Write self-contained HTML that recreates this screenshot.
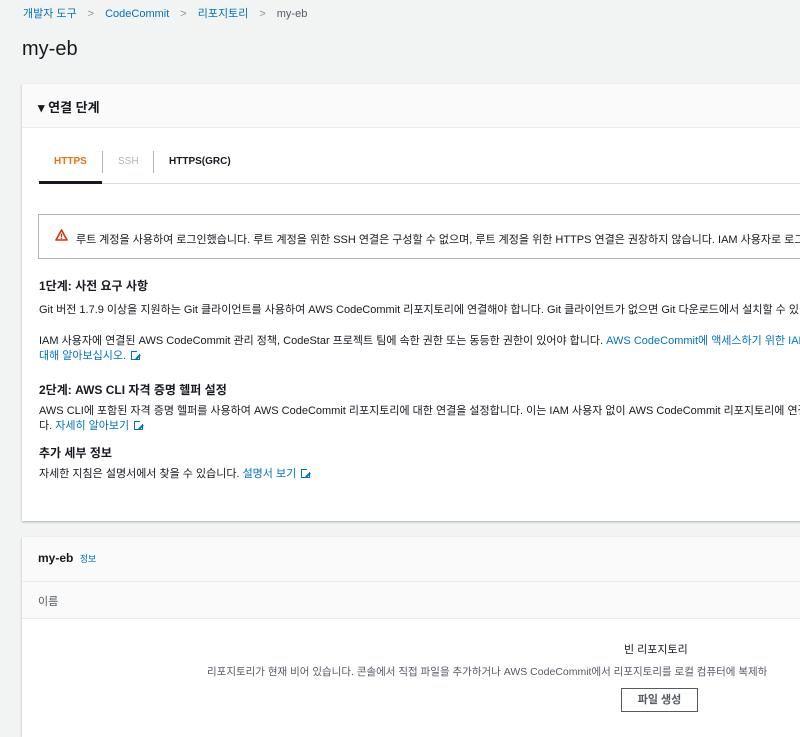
<!DOCTYPE html>
<html><head><meta charset="utf-8"><style>
*{margin:0;padding:0;box-sizing:border-box}
body{width:800px;height:729px;overflow:hidden;background:#f2f3f3;font-family:"Liberation Sans","Noto Sans CJK KR",sans-serif;color:#16191f;font-size:11px;position:relative}
.abs{position:absolute;white-space:nowrap}
a{color:#0073bb;text-decoration:none}
.bc{top:5px;left:23px;font-size:11px;color:#0073bb}
.bc .s{color:#879596;margin:0 11px}
.bc .c{color:#545b64}
h1{position:absolute;top:38px;left:22px;font-size:20px;font-weight:normal}
.card{position:absolute;left:22px;width:800px;background:#fff;box-shadow:0 1px 2px rgba(0,28,36,.3)}
.ext{display:inline-block;width:9px;height:9px;border:1.5px solid #0073bb;margin-left:5px;vertical-align:-1px;position:relative}
.ext:after{content:"";position:absolute;right:-3px;top:-3px;width:5px;height:5px;background:#fff}
.ext:before{content:"";position:absolute;right:-1px;top:2px;width:6px;height:1.5px;background:#0073bb;transform:rotate(-45deg);transform-origin:right}
</style></head><body>
<div class="abs bc">개발자 도구<span class="s">&gt;</span>CodeCommit<span class="s">&gt;</span>리포지토리<span class="s">&gt;</span><span class="c">my-eb</span></div>
<h1>my-eb</h1>
<div class="card" style="top:84px;height:437px">
 <div style="height:44px;background:#fafafa;border-bottom:1px solid #eaeded"></div>
 <div class="abs" style="left:16px;top:13px;font-size:13px;font-weight:bold">▾ 연결 단계</div>
 <div class="abs" style="left:17px;top:99px;width:800px;border-bottom:1px solid #d5dbdb"></div>
 <div class="abs" style="left:17px;top:97px;width:63px;height:3px;background:#16191f"></div>
 <div class="abs" style="left:32px;top:72px;font-weight:bold;color:#ec7211;font-size:10px">HTTPS</div>
 <div class="abs" style="left:80px;top:67px;width:1px;height:22px;background:#aab7b8"></div>
 <div class="abs" style="left:96px;top:72px;color:#aab7b8;font-size:10px">SSH</div>
 <div class="abs" style="left:131px;top:67px;width:1px;height:22px;background:#aab7b8"></div>
 <div class="abs" style="left:147px;top:72px;font-weight:bold;font-size:10px">HTTPS(GRC)</div>
 <div class="abs" style="left:16px;top:130px;width:800px;height:45px;border:1px solid #aab7b8"></div>
 <svg class="abs" style="left:33px;top:145px" width="13" height="12" viewBox="0 0 13 12"><path d="M6.5 1L12 11H1Z" fill="none" stroke="#d13212" stroke-width="1.6" stroke-linejoin="round"/><rect x="5.8" y="4.5" width="1.4" height="3.5" fill="#d13212"/><rect x="5.8" y="8.7" width="1.4" height="1.3" fill="#d13212"/></svg>
 <div class="abs" style="left:54px;top:147px;color:#16191f">루트 계정을 사용하여 로그인했습니다. 루트 계정을 위한 SSH 연결은 구성할 수 없으며, 루트 계정을 위한 HTTPS 연결은 권장하지 않습니다. IAM 사용자로 로그인</div>
 <div class="abs" style="left:17px;top:193px;font-weight:bold;font-size:12px">1단계: 사전 요구 사항</div>
 <div class="abs" style="left:17px;top:217px">Git 버전 1.7.9 이상을 지원하는 Git 클라이언트를 사용하여 AWS CodeCommit 리포지토리에 연결해야 합니다. Git 클라이언트가 없으면 Git 다운로드에서 설치할 수 있</div>
 <div class="abs" style="left:17px;top:248px">IAM 사용자에 연결된 AWS CodeCommit 관리 정책, CodeStar 프로젝트 팀에 속한 권한 또는 동등한 권한이 있어야 합니다. <a>AWS CodeCommit에 액세스하기 위한 IAM</a></div>
 <div class="abs" style="left:17px;top:263px"><a>대해 알아보십시오.</a><span class="ext"></span></div>
 <div class="abs" style="left:17px;top:297px;font-weight:bold;font-size:12px">2단계: AWS CLI 자격 증명 헬퍼 설정</div>
 <div class="abs" style="left:17px;top:318px">AWS CLI에 포함된 자격 증명 헬퍼를 사용하여 AWS CodeCommit 리포지토리에 대한 연결을 설정합니다. 이는 IAM 사용자 없이 AWS CodeCommit 리포지토리에 연결</div>
 <div class="abs" style="left:17px;top:333px">다. <a>자세히 알아보기</a><span class="ext"></span></div>
 <div class="abs" style="left:17px;top:360px;font-weight:bold;font-size:12px">추가 세부 정보</div>
 <div class="abs" style="left:17px;top:381px">자세한 지침은 설명서에서 찾을 수 있습니다. <a>설명서 보기</a><span class="ext"></span></div>
</div>
<div class="card" style="top:537px;height:200px">
 <div style="height:45px;background:#fafafa;border-bottom:1px solid #eaeded"></div>
 <div class="abs" style="left:16px;top:14px;font-weight:bold;font-size:12px">my-eb <a style="font-weight:normal;font-size:9px;margin-left:3px">정보</a></div>
 <div style="height:37px;background:#fafafa;border-bottom:1px solid #eaeded"></div>
 <div class="abs" style="left:16px;top:56px;color:#545b64">이름</div>
 <div class="abs" style="left:602px;top:104px;color:#16191f">빈 리포지토리</div>
 <div class="abs" style="left:185px;top:127px;color:#545b64;font-size:10.5px">리포지토리가 현재 비어 있습니다. 콘솔에서 직접 파일을 추가하거나 AWS CodeCommit에서 리포지토리를 로컬 컴퓨터에 복제하</div>
 <div class="abs" style="left:599px;top:151px;width:77px;height:24px;border:1px solid #545b64;text-align:center;line-height:22px;font-weight:bold;color:#545b64">파일 생성</div>
</div>
</body></html>
